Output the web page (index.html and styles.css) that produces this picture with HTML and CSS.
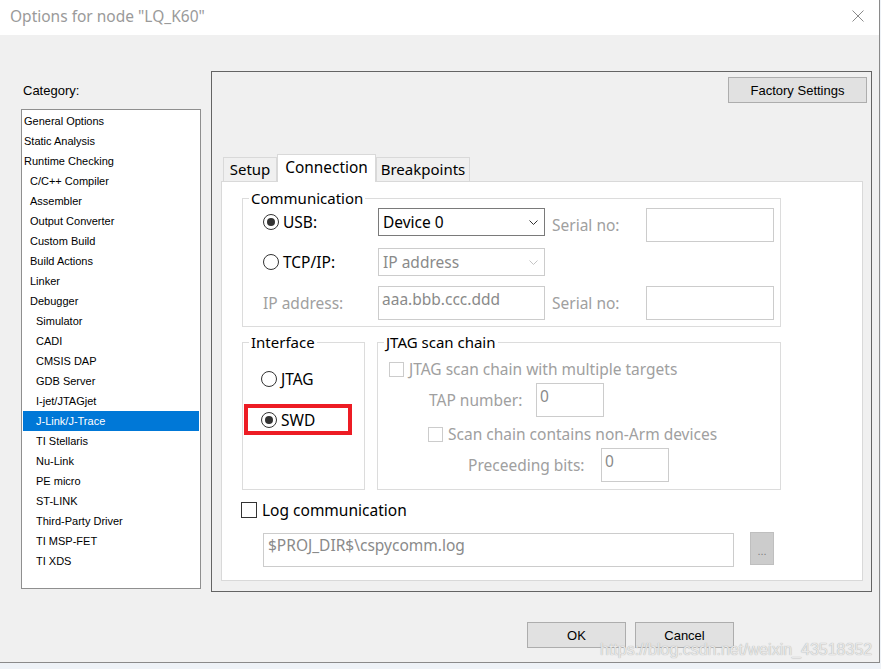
FILE: index.html
```html
<!DOCTYPE html>
<html>
<head>
<meta charset="utf-8">
<title>Options for node "LQ_K60"</title>
<link rel="stylesheet" href="styles.css">
</head>
<body>
<div class="window">
  <div class="titlebar">
    <span class="title">Options for node "LQ_K60"</span>
    <svg class="close" width="12" height="12" viewBox="0 0 12 12"><path d="M0.5 0.5 L11.5 11.5 M11.5 0.5 L0.5 11.5" stroke="#8a8a8a" stroke-width="1" fill="none"/></svg>
  </div>
  <div class="main">
    <div class="sidebar">
      <div class="cat-label">Category:</div>
      <ul class="cat-list">
        <li class="l0">General Options</li>
        <li class="l0">Static Analysis</li>
        <li class="l0">Runtime Checking</li>
        <li class="l1">C/C++ Compiler</li>
        <li class="l1">Assembler</li>
        <li class="l1">Output Converter</li>
        <li class="l1">Custom Build</li>
        <li class="l1">Build Actions</li>
        <li class="l1">Linker</li>
        <li class="l1">Debugger</li>
        <li class="l2">Simulator</li>
        <li class="l2">CADI</li>
        <li class="l2">CMSIS DAP</li>
        <li class="l2">GDB Server</li>
        <li class="l2">I-jet/JTAGjet</li>
        <li class="l2 sel">J-Link/J-Trace</li>
        <li class="l2">TI Stellaris</li>
        <li class="l2">Nu-Link</li>
        <li class="l2">PE micro</li>
        <li class="l2">ST-LINK</li>
        <li class="l2">Third-Party Driver</li>
        <li class="l2">TI MSP-FET</li>
        <li class="l2">TI XDS</li>
      </ul>
    </div>
    <div class="right">
      <div class="panel">
        <button class="btn factory">Factory Settings</button>
        <div class="tabs">
          <div class="tab t-setup">Setup</div>
          <div class="tab t-conn active">Connection</div>
          <div class="tab t-bp">Breakpoints</div>
        </div>
        <div class="page">
          <div class="group comm">
            <div class="legend">Communication</div>
            <div class="crow r1">
              <div class="c-label"><span class="radio on"></span>USB:</div>
              <div class="combo"><span>Device 0</span><svg width="9" height="5" viewBox="0 0 9 5"><polyline points="0.5,0.5 4.5,4.5 8.5,0.5" fill="none" stroke="#333" stroke-width="1"/></svg></div>
              <div class="serial">Serial no:</div>
              <div class="tbox sbox"></div>
            </div>
            <div class="crow r2">
              <div class="c-label"><span class="radio"></span>TCP/IP:</div>
              <div class="combo dis"><span>IP address</span><svg width="9" height="5" viewBox="0 0 9 5"><polyline points="0.5,0.5 4.5,4.5 8.5,0.5" fill="none" stroke="#c4c4c4" stroke-width="1"/></svg></div>
            </div>
            <div class="crow r3">
              <div class="c-label dim">IP address:</div>
              <div class="tbox ipbox">aaa.bbb.ccc.ddd</div>
              <div class="serial">Serial no:</div>
              <div class="tbox sbox"></div>
            </div>
          </div>
          <div class="grow">
            <div class="group iface">
              <div class="legend">Interface</div>
              <div class="rrow"><span class="radio"></span>JTAG</div>
              <div class="redbox"><span class="radio on"></span>SWD</div>
            </div>
            <div class="group jtag">
              <div class="legend">JTAG scan chain</div>
              <div class="jrow j1"><span class="cb"></span><span class="dim">JTAG scan chain with multiple targets</span></div>
              <div class="jrow j2"><span class="dim tap-label">TAP number:</span><div class="tbox numbox">0</div></div>
              <div class="jrow j3"><span class="cb"></span><span class="dim">Scan chain contains non-Arm devices</span></div>
              <div class="jrow j4"><span class="dim pre-label">Preceeding bits:</span><div class="tbox numbox">0</div></div>
            </div>
          </div>
          <div class="logrow"><span class="cb dark"></span>Log communication</div>
          <div class="pathrow">
            <div class="tbox path">$PROJ_DIR$\cspycomm.log</div>
            <div class="dots">...</div>
          </div>
        </div>
      </div>
      <div class="dlg-btns">
        <button class="btn">OK</button>
        <button class="btn">Cancel</button>
      </div>
    </div>
  </div>
  <div class="watermark">https://blog.csdn.net/weixin_43518352</div>
</div>
</body>
</html>
```

FILE: styles.css
```css
* { box-sizing: border-box; }
html, body { margin: 0; padding: 0; }
body {
  width: 881px;
  height: 669px;
  overflow: hidden;
  background: #eef2f7;
  font-family: "Noto Sans", "Liberation Sans", sans-serif;
}
.window {
  position: relative;
  width: 880px;
  height: 663px;
  background: #f0f0f0;
  border-right: 1px solid #8a8a8a;
  border-bottom: 1px solid #8a8a8a;
}
.titlebar {
  height: 35px;
  background: #fff;
  display: flex;
  align-items: flex-start;
}
.title {
  margin-left: 10px;
  font-size: 15.5px;
  line-height: 33px;
  color: #9a9a9a;
}
.close {
  margin-left: auto;
  margin-right: 15px;
  margin-top: 10px;
}
.main {
  display: flex;
  height: 627px;
}
.sidebar {
  margin-left: 21px;
  width: 180px;
  padding-top: 48px;
}
.cat-label {
  font: 13px/16px "Liberation Sans", Arial, sans-serif;
  color: #000;
  margin: 0 0 10px 2px;
}
.cat-list {
  list-style: none;
  margin: 0;
  padding: 1px;
  height: 480px;
  border: 1px solid #8f8f8f;
  background: #fff;
  font: 11px/20px "Liberation Sans", Arial, sans-serif;
  color: #000;
}
.cat-list li { height: 20px; white-space: nowrap; }
.l0 { padding-left: 1px; }
.l1 { padding-left: 7px; }
.l2 { padding-left: 13px; }
.cat-list li.sel { background: #0078d7; color: #fff; }

.right {
  margin-left: 10px;
  display: flex;
  flex-direction: column;
}
.panel {
  margin-top: 36px;
  width: 661px;
  height: 521px;
  border: 1px solid #646464;
  display: flex;
  flex-direction: column;
}
.btn {
  font: 13px "Liberation Sans", Arial, sans-serif;
  color: #000;
  background: #e1e1e1;
  border: 1px solid #adadad;
  height: 26px;
  padding: 0;
  border-radius: 0;
}
.factory {
  align-self: flex-end;
  margin: 5px 4px 0 0;
  width: 139px;
}
.tabs {
  display: flex;
  align-items: flex-end;
  height: 27px;
  margin: 51px 0 0 11px;
}
.tab {
  height: 24px;
  border: 1px solid #d9d9d9;
  border-bottom: none;
  background: #f0f0f0;
  font-size: 15px;
  line-height: 22px;
  text-align: center;
  color: #000;
}
.tab.active {
  height: 28px;
  margin-bottom: -1px;
  background: #fff;
  position: relative;
  z-index: 1;
  line-height: 26px;
  font-size: 15.4px;
}
.t-setup { width: 54px; }
.t-conn { width: 99px; }
.t-bp { width: 94px; }

.page {
  margin: 0 8px 0 9px;
  height: 400px;
  border: 1px solid #d9d9d9;
  background: #fff;
  padding-left: 20px;
  font-size: 15.5px;
  color: #000;
}
.group { border: 1px solid #dcdcdc; }
.legend {
  width: fit-content;
  margin: -11px 0 0 6px;
  padding: 0 2px;
  background: #fff;
  line-height: 20px;
  white-space: nowrap;
  font-size: 15px;
}
.comm {
  margin-top: 16px;
  width: 539px;
  padding-bottom: 6px;
}
.crow {
  display: flex;
  align-items: center;
  padding-left: 20px;
}
.crow.r2 { margin-top: 6px; }
.crow.r3 { margin-top: 10px; }
.c-label {
  width: 115px;
  height: 28px;
  display: flex;
  align-items: center;
}
.r1 .c-label, .r1 .combo { align-self: flex-start; }
.combo {
  width: 167px;
  height: 28px;
  border: 1px solid #7a7a7a;
  display: flex;
  align-items: center;
  justify-content: space-between;
  padding: 0 6px 0 4px;
  line-height: 26px;
}
.combo.dis { border-color: #cccccc; color: #8a8a8a; }
.serial {
  width: 101px;
  padding-left: 7px;
  color: #a0a0a0;
}
.dim { color: #a0a0a0; }
.tbox {
  border: 1px solid #cccccc;
  height: 34px;
  background: #fff;
  color: #8a8a8a;
  padding: 2px 3px 0;
  line-height: 20px;
}
.sbox { width: 128px; }
.ipbox { width: 167px; }

.radio {
  flex: none;
  width: 16px;
  height: 16px;
  border: 1px solid #333;
  border-radius: 50%;
  margin-right: 4px;
  display: flex;
  align-items: center;
  justify-content: center;
  background: #fff;
}
.radio.on::after {
  content: "";
  width: 8px;
  height: 8px;
  border-radius: 50%;
  background: #333;
}

.grow {
  display: flex;
  gap: 12px;
  margin-top: 15px;
  width: 539px;
}
.iface { width: 123px; }
.rrow {
  margin: 17px 0 0 18px;
  height: 20px;
  display: flex;
  align-items: center;
}
.redbox {
  margin: 15px 0 0 1px;
  width: 108px;
  height: 31px;
  border: 4px solid #ed1c24;
  display: flex;
  align-items: center;
  padding-left: 13px;
}
.jtag { width: 404px; padding-bottom: 7px; }
.jrow { display: flex; align-items: center; white-space: nowrap; }
.j1 { margin: 7px 0 0 11px; height: 20px; }
.j2 { margin-top: 4px; padding-left: 51px; height: 34px; }
.j3 { margin: 7px 0 0 50px; height: 20px; }
.j4 { margin-top: 4px; padding-left: 90px; height: 34px; }
.tap-label { width: 107px; }
.pre-label { width: 133px; }
.numbox { width: 68px; }
.cb {
  flex: none;
  width: 15px;
  height: 15px;
  border: 1px solid #cccccc;
  margin-right: 5px;
  background: #fff;
}
.cb.dark { width: 16px; height: 16px; border-color: #333; }

.logrow {
  margin: 10px 0 0 -1px;
  height: 20px;
  display: flex;
  align-items: center;
}
.pathrow {
  display: flex;
  align-items: flex-start;
  margin-top: 12px;
}
.path {
  margin: 1px 0 0 21px;
  width: 471px;
  padding: 1px 4px 0;
}
.dots {
  margin-left: 16px;
  width: 24px;
  height: 33px;
  background: #cccccc;
  border: 1px solid #bfbfbf;
  color: #808080;
  font: 11px "Liberation Sans", Arial, sans-serif;
  display: flex;
  align-items: center;
  justify-content: center;
  padding-top: 4px;
}
.dlg-btns {
  display: flex;
  justify-content: flex-end;
  gap: 9px;
  margin-top: 30px;
  padding-right: 138px;
}
.dlg-btns .btn { width: 99px; }
.watermark {
  position: absolute;
  left: 600px;
  top: 641px;
  font: 16px/18px "Liberation Sans", Arial, sans-serif;
  color: #e8e8e8;
  text-shadow: 0 0 1px #9a9a9a;
  white-space: nowrap;
}
```
